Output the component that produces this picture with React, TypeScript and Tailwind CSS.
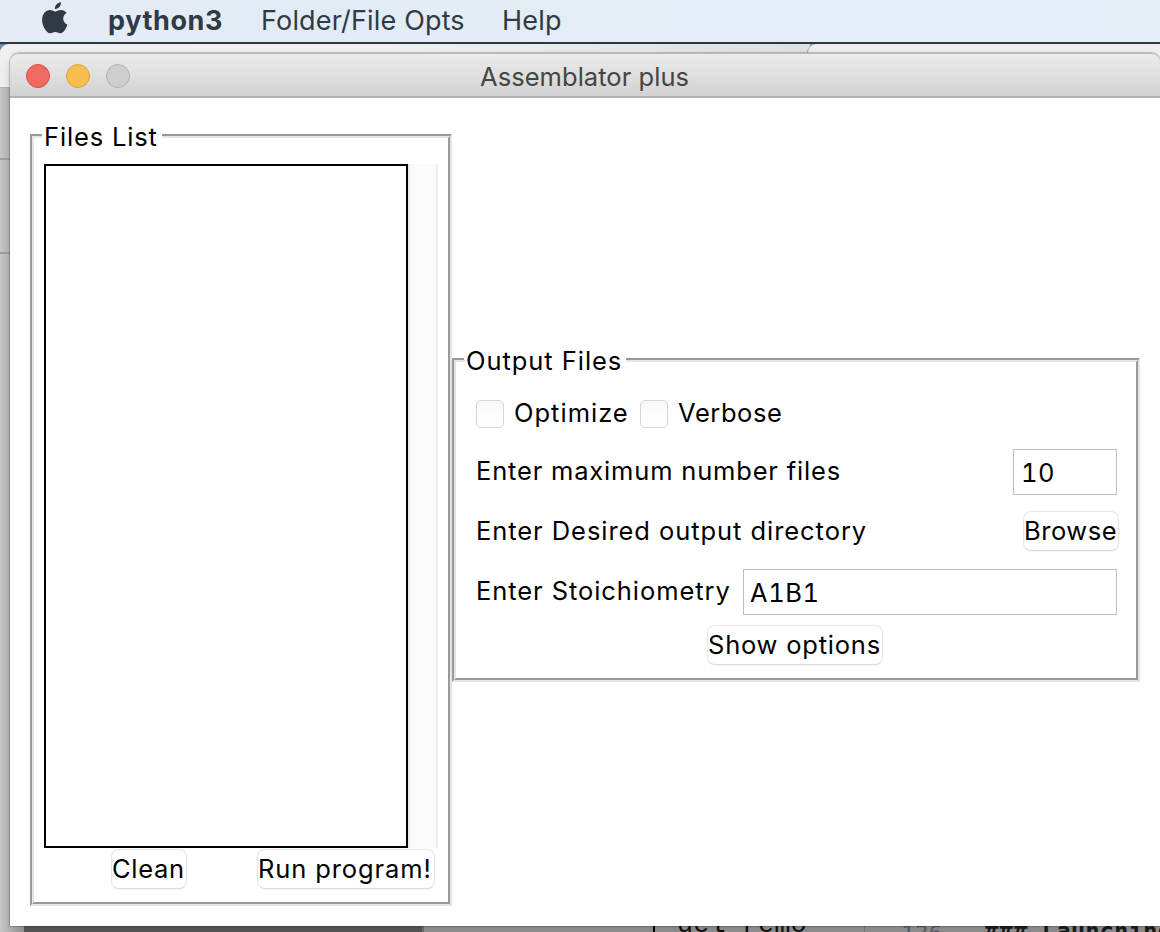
import React from "react";

function Groove({ title, titleClass, className, children }: { title: string; titleClass: string; className: string; children: React.ReactNode }) {
  return (
    <section className={`relative border-2 border-t-[#999] border-r-[#e5e5e5] border-b-[#e5e5e5] border-l-[#999] ${className}`}>
      <div className="h-full border-2 border-t-[#e5e5e5] border-r-[#999] border-b-[#999] border-l-[#e5e5e5]">{children}</div>
      <h2 className={`absolute -top-[15px] left-[10px] h-[32px] bg-white pl-[2px] leading-[32px] whitespace-nowrap ${titleClass}`}>{title}</h2>
    </section>
  );
}

function PushButton({ label, className }: { label: string; className: string }) {
  return (
    <button
      className={`flex h-[40px] shrink-0 items-center rounded-[8px] border border-[#e6e6e6] border-b-[#dcdcdc] bg-white leading-[36px] whitespace-nowrap shadow-[0_1px_1px_rgba(0,0,0,0.04)] ${className}`}
    >
      {label}
    </button>
  );
}

function Check({ label, className }: { label: string; className: string }) {
  return (
    <label className={`flex items-center ${className}`}>
      <span className="mr-[10px] size-[28px] shrink-0 rounded-[5px] border border-[#d6d6d6] bg-linear-to-b from-[#f8f8f8] via-[#fdfdfd] to-white" />
      <span className="-mt-[2px] whitespace-nowrap">{label}</span>
    </label>
  );
}

function MenuBar() {
  return (
    <nav className="relative flex h-[44px] items-start border-b-2 border-[#2b3944] bg-linear-to-r from-[#e4ebf5] via-[#e2edf6] to-[#e5edf7] text-[27px] leading-[42px] text-[#2f3a44]">
      <svg className="mt-[1px] ml-[41px] h-[34px] w-[28px] shrink-0" viewBox="0 0 28 34" fill="#2f3a44">
        <path d="M20 1.2c.2 3.700-2.800 6.900-6.100 6.700-.3-3.300 2.800-6.500 6.100-6.700Z" />
        <path d="M14.300 10.700c1.300 0 3.200-1.600 5.800-1.600 2.200.1 4.200 1.200 5.400 2.900-4.900 3-4.100 9.600.9 11.600-.8 2.600-3.300 8.400-6.500 8.700-2.100.1-3-1.300-5.500-1.300s-3.600 1.300-5.400 1.300C5.600 32.200 1.200 25.600 1.100 19.300 1 13 5 9.200 8.900 9.100c2.300 0 4.100 1.600 5.400 1.600Z" />
      </svg>
      <span className="ml-[39px] w-[153px] font-bold tracking-[0.6px]">python3</span>
      <span className="w-[241px] tracking-[0.16px] whitespace-nowrap">Folder/File Opts</span>
      <span className="tracking-[0.2px]">Help</span>
    </nav>
  );
}

function Backdrop() {
  return (
    <div className="absolute inset-x-0 top-[44px] bottom-0 overflow-hidden bg-[#9a9a9a]">
      <div className="absolute top-0 left-0 h-[20px] w-[24px] bg-[#6f8ba5]" />
      <div className="absolute top-0 left-0 h-[888px] w-[24px] rounded-tl-[9px] bg-linear-to-r from-[#c8c8c8] to-[#a0a0a0]" />
      <div className="absolute top-0 left-0 h-[43px] w-[810px] rounded-tl-[9px] bg-linear-to-r from-[#f0f0f0] via-[#f0f0f0] to-[#e0e0e0]" />
      <div className="absolute top-0 left-[807px] h-[20px] w-[353px] rounded-tl-[9px] border-l border-[#aaa] bg-[#eeeeee]" />
      <div className="absolute top-[43px] left-0 h-px w-[10px] bg-[#b4b4b4]" />
      <div className="absolute top-[114px] left-0 h-[2px] w-[10px] bg-[#a0a0a0]" />
      <div className="absolute top-[208px] left-0 h-[2px] w-[10px] bg-[#a0a0a0]" />
      <div className="absolute top-[882px] left-[24px] h-[6px] w-[398px] bg-[#5c5c5c]" />
      <div className="absolute top-[882px] left-[422px] h-[6px] w-[2px] bg-[#777]" />
      <div className="absolute top-[882px] left-[653px] h-[6px] w-[2px] bg-black" />
      <div className="absolute top-[882px] left-[864px] h-[6px] w-px bg-[#808080]" />
      <code className="absolute top-[864px] left-[677px] w-[131px] overflow-hidden font-['Liberation_Mono'] text-[27px] leading-[34px] whitespace-pre text-[#111]">del remo</code>
      <code className="absolute top-[878px] left-[901px] font-['DejaVu_Sans_Mono'] text-[23px] leading-[24px] whitespace-pre text-[#5f636a]">136</code>
      <code className="absolute top-[876px] left-[984px] font-['DejaVu_Sans_Mono'] text-[24px] leading-[24px] font-bold whitespace-pre text-[#1b1f22]">### Launching</code>
    </div>
  );
}

export default function App() {
  return (
    <div className="relative h-[932px] w-[1160px] overflow-hidden bg-[#6f8ba5] font-['Inter',sans-serif] text-[25.5px] text-black">
      <Backdrop />
      <MenuBar />
      <main className="relative mt-[9px] ml-[10px] h-[873px] w-[1150px] rounded-t-[9px] bg-white shadow-[0_0_1px_1px_rgba(0,0,0,0.2),0_6px_12px_rgba(0,0,0,0.15)]">
        <header className="relative flex h-[45px] items-center rounded-t-[9px] border-t border-b-2 border-t-[#b8b8b8] border-b-[#b1b1b1] bg-linear-to-b from-[#ececec] to-[#d2d2d2] pt-[2px] pl-[16px]">
          <i className="mr-[16px] size-[24px] rounded-full border border-[#dc4f46] bg-[#ee6b60]" />
          <i className="mr-[16px] size-[24px] rounded-full border border-[#dfa03a] bg-[#f6be4f]" />
          <i className="size-[24px] rounded-full border border-[#b2b2b2] bg-[#cecece]" />
          <h1 className="ml-[350px] pt-[2px] leading-[38px] tracking-[0.05px] text-[#454545]">Assemblator plus</h1>
        </header>
        <div className="flex pl-[20px]">
          <Groove title="Files List" titleClass="w-[120px] tracking-[0.85px]" className="mt-[36px] h-[772px] w-[422px]">
            <div className="flex px-[10px] pt-[26px]">
              <div className="h-[684px] w-[364px] border-2 border-black" />
              <div className="h-[684px] w-[30px] border-x-2 border-[#ebebeb] bg-[#fafafa]" />
            </div>
            <div className="flex pt-[1px] pl-[77px]">
              <PushButton label="Clean" className="w-[76px] tracking-[0.7px]" />
              <PushButton label="Run program!" className="ml-[70px] w-[178px] tracking-[0.88px]" />
            </div>
          </Groove>
          <Groove title="Output Files" titleClass="w-[162px] tracking-[0.95px]" className="mt-[260px] h-[324px] w-[688px]">
            <div className="flex h-[70px] pt-[34px] pl-[20px]">
              <Check label="Optimize" className="w-[164px] tracking-[1px]" />
              <Check label="Verbose" className="tracking-[0.58px]" />
            </div>
            <div className="mt-[17px] flex h-[46px] justify-between pr-[19px] pl-[20px]">
              <span className="leading-[44px] tracking-[0.82px]">Enter maximum number files</span>
              <div className="h-[46px] w-[104px] border border-[#bfbfbf] pl-[7px] leading-[46px] tracking-[0.4px] tabular-nums">10</div>
            </div>
            <div className="mt-[16px] flex h-[40px] justify-between pr-[17px] pl-[20px]">
              <span className="leading-[40px] tracking-[0.94px]">Enter Desired output directory</span>
              <PushButton label="Browse" className="w-[96px] tracking-[0.55px]" />
            </div>
            <div className="mt-[18px] flex h-[46px] justify-between pr-[19px] pl-[20px]">
              <span className="leading-[44px] tracking-[0.93px]">Enter Stoichiometry</span>
              <div className="h-[46px] w-[374px] border border-[#bfbfbf] pl-[6px] leading-[46px] tracking-[0.6px] tabular-nums">A1B1</div>
            </div>
            <div className="mt-[10px] pl-[251px]">
              <PushButton label="Show options" className="w-[176px] tracking-[0.78px]" />
            </div>
          </Groove>
        </div>
      </main>
    </div>
  );
}
